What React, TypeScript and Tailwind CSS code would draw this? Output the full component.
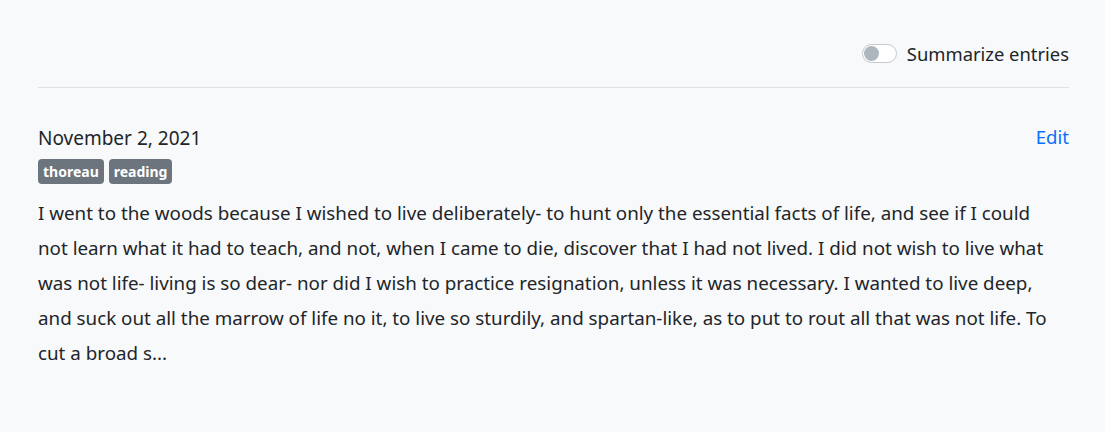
import React, { useState } from "react";

// the lines wrap as in the original layout
const lines = [
  "I went to the woods because I wished to live deliberately- to hunt only the essential facts of life, and see if I could",
  "not learn what it had to teach, and not, when I came to die, discover that I had not lived. I did not wish to live what",
  "was not life- living is so dear- nor did I wish to practice resignation, unless it was necessary. I wanted to live deep,",
  "and suck out all the marrow of life no it, to live so sturdily, and spartan-like, as to put to rout all that was not life. To",
  "cut a broad s...",
];

export default function App() {
  const [summarize, setSummarize] = useState(false);

  return (
    <div className="min-h-screen w-full bg-[#f8f9fa] text-[#212529] font-['Noto_Sans',sans-serif]">
      <div className="pl-[38px] pr-[36px]">
        {/* Toolbar */}
        <div className="flex items-center justify-end h-[88px] border-b border-[#dee2e6] pt-[20px]">
          <button
            onClick={() => setSummarize(!summarize)}
            className="flex items-center gap-[10px] text-[18.4px]"
          >
            <span
              className={`relative w-[35px] h-[19px] rounded-full border ${summarize ? "bg-[#0d6efd] border-[#0d6efd]" : "bg-white border-[#c4c9ce]"}`}
            >
              <span
                className={`absolute top-[1px] w-[15px] h-[15px] rounded-full ${summarize ? "left-[17px] bg-white" : "left-[1px] bg-[#adb5bd]"}`}
              />
            </span>
            <span>Summarize entries</span>
          </button>
        </div>

        {/* Entry */}
        <div className="pt-[36px]">
          <div className="flex items-start justify-between">
            <div className="text-[19px] leading-[28px]">November 2, 2021</div>
            <a href="#" className="text-[18.6px] leading-[26px] text-[#0d6efd]">Edit</a>
          </div>
          <div className="flex gap-[5px] mt-[7px]">
            <span className="px-[5px] h-[25px] flex items-center rounded-[4px] bg-[#6c757d] text-white text-[14px] font-bold">thoreau</span>
            <span className="px-[5px] h-[25px] flex items-center rounded-[4px] bg-[#6c757d] text-white text-[14px] font-bold">reading</span>
          </div>
          <div className="mt-[12px] text-[18.8px] leading-[35px]">
            {lines.map((l, i) => (
              <div key={i} className="whitespace-nowrap">{l}</div>
            ))}
          </div>
        </div>
      </div>
    </div>
  );
}
